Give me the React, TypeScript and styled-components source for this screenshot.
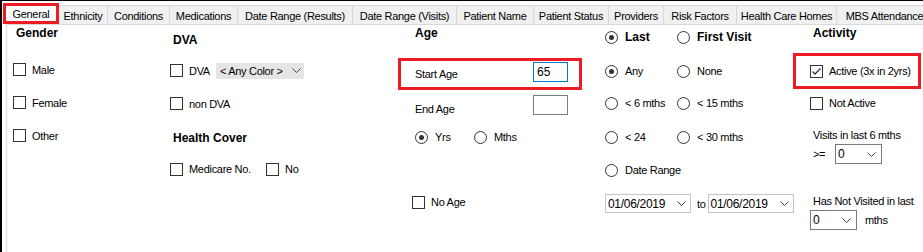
import React from "react";
import styled, { createGlobalStyle } from "styled-components";

const GlobalStyle = createGlobalStyle`
  html, body {
    margin: 0;
    padding: 0;
    background: #fff;
  }
  body {
    font-family: "Liberation Sans", Arial, sans-serif;
    font-size: 11px;
    color: #000;
  }
`;

const RED = "#ed1c24";

const Window = styled.div`
  width: 923px;
  height: 252px;
  box-sizing: border-box;
  border-top: 1px solid #000;
  border-left: 2px solid #000;
  background: #fff;
  overflow: hidden;
  display: flex;
  flex-direction: column;
`;

const TabStrip = styled.div`
  display: flex;
  align-items: flex-end;
  height: 23px;
  padding-left: 1px;
  flex-shrink: 0;
  white-space: nowrap;
`;

const Tab = styled.div<{ $w: number; $selected?: boolean }>`
  flex-shrink: 0;
  box-sizing: border-box;
  width: ${p => p.$w}px;
  height: ${p => (p.$selected ? 21 : 19)}px;
  display: flex;
  align-items: center;
  justify-content: center;
  letter-spacing: -0.3px;
  background: ${p => (p.$selected ? "#fff" : "#f0f0f0")};
  border: ${p => (p.$selected ? `3px solid ${RED}` : "1px solid #d9d9d9")};
  border-left: ${p => (p.$selected ? `3px solid ${RED}` : "none")};
  border-bottom: ${p => (p.$selected ? `3px solid ${RED}` : "none")};
  padding-top: ${p => (p.$selected ? 0 : 1)}px;
`;

const TabPage = styled.div`
  flex: 1;
  margin-left: 4px;
  border-left: 1px solid #d9d9d9;
  border-top: 1px solid #d9d9d9;
  padding-left: 6px;
  display: grid;
  grid-template-columns: 157px 228px 207px 188px 1fr;
  align-items: start;
`;

const Column = styled.div`
  display: flex;
  flex-direction: column;
  align-items: flex-start;
`;

const Heading = styled.div<{ $mt?: number; $indent?: number }>`
  font-weight: bold;
  font-size: 12px;
  line-height: 14px;
  height: 14px;
  margin-top: ${p => p.$mt ?? 0}px;
  padding-left: ${p => p.$indent ?? 0}px;
  white-space: nowrap;
`;

const Text = styled.div<{ $mt?: number; $indent?: number }>`
  line-height: 14px;
  height: 14px;
  letter-spacing: -0.3px;
  margin-top: ${p => p.$mt ?? 0}px;
  padding-left: ${p => p.$indent ?? 0}px;
  white-space: nowrap;
`;

const Line = styled.div<{ $mt?: number; $h?: number; $indent?: number }>`
  display: flex;
  align-items: center;
  height: ${p => p.$h ?? 20}px;
  margin-top: ${p => p.$mt ?? 0}px;
  padding-left: ${p => p.$indent ?? 0}px;
  white-space: nowrap;
`;

const Highlight = styled.div<{ $w: number; $h: number; $mt: number }>`
  box-sizing: border-box;
  width: ${p => p.$w}px;
  height: ${p => p.$h}px;
  margin-top: ${p => p.$mt}px;
  border: 3px solid ${RED};
  padding-left: 14px;
  display: flex;
  align-items: center;
  white-space: nowrap;
`;

const Label = styled.span<{ $bold?: boolean; $gap?: number }>`
  margin-left: ${p => p.$gap ?? 0}px;
  letter-spacing: ${p => (p.$bold ? "0" : "-0.3px")};
  font-weight: ${p => (p.$bold ? "bold" : "normal")};
  font-size: ${p => (p.$bold ? 12 : 11)}px;
`;

const FieldLabel = styled.span<{ $low?: boolean }>`
  display: inline-block;
  width: 118px;
  letter-spacing: -0.3px;
  align-self: ${p => (p.$low ? "flex-end" : "center")};
`;

const Box = styled.span`
  box-sizing: border-box;
  width: 13px;
  height: 13px;
  border: 1px solid #333;
  background: #fff;
  display: inline-flex;
  align-items: center;
  justify-content: center;
  flex-shrink: 0;
`;

const Circle = styled.span`
  box-sizing: border-box;
  width: 13px;
  height: 13px;
  border: 1px solid #333;
  border-radius: 50%;
  background: #fff;
  display: inline-flex;
  align-items: center;
  justify-content: center;
  flex-shrink: 0;
`;

const Dot = styled.span`
  width: 5px;
  height: 5px;
  border-radius: 50%;
  background: #333;
`;

const OptionSlot = styled.span<{ $w?: number }>`
  display: inline-flex;
  align-items: center;
  width: ${p => (p.$w ? `${p.$w}px` : "auto")};
`;

const TextInput = styled.div<{ $focused?: boolean }>`
  box-sizing: border-box;
  width: 35px;
  height: 20px;
  border: 1px solid ${p => (p.$focused ? "#0078d7" : "#7a7a7a")};
  padding-left: 3px;
  line-height: 18px;
  font-size: 12px;
  align-self: ${p => (p.$focused ? "flex-start" : "center")};
  margin-top: ${p => (p.$focused ? 1 : 0)}px;
`;

const Combo = styled.div<{ $w: number; $h: number; $flat?: boolean; $border?: string; $chevronGap: number; $ml?: number }>`
  box-sizing: border-box;
  width: ${p => p.$w}px;
  height: ${p => p.$h}px;
  margin-left: ${p => p.$ml ?? 0}px;
  display: flex;
  align-items: center;
  justify-content: space-between;
  padding-left: ${p => (p.$flat ? 4 : 2)}px;
  padding-right: ${p => p.$chevronGap}px;
  background: ${p => (p.$flat ? "#e5e5e5" : "#fff")};
  border: ${p => (p.$flat ? "none" : `1px solid ${p.$border}`)};
  letter-spacing: -0.3px;
  font-size: ${p => (p.$flat ? 11 : 12)}px;
`;

const Chevron = () => (
  <svg width="9" height="5" viewBox="0 0 9 5">
    <polyline points="0.5,0.5 4.5,4.5 8.5,0.5" fill="none" stroke="#444" strokeWidth="1" />
  </svg>
);

const Check = ({ label, checked, gap = 6 }: { label: string; checked?: boolean; gap?: number }) => (
  <>
    <Box>
      {checked && (
        <svg width="11" height="11" viewBox="0 0 11 11">
          <polyline points="1.5,5.5 4,8 9.5,2.5" fill="none" stroke="#333" strokeWidth="1.3" />
        </svg>
      )}
    </Box>
    <Label $gap={gap}>{label}</Label>
  </>
);

const Radio = ({ label, checked, bold, w }: { label: string; checked?: boolean; bold?: boolean; w?: number }) => (
  <OptionSlot $w={w}>
    <Circle>{checked && <Dot />}</Circle>
    <Label $gap={7} $bold={bold}>{label}</Label>
  </OptionSlot>
);

const tabs = [
  { label: "General", width: 56, selected: true },
  { label: "Ethnicity", width: 49 },
  { label: "Conditions", width: 62 },
  { label: "Medications", width: 68 },
  { label: "Date Range (Results)", width: 115 },
  { label: "Date Range (Visits)", width: 104 },
  { label: "Patient Name", width: 77 },
  { label: "Patient Status", width: 75 },
  { label: "Providers", width: 55 },
  { label: "Risk Factors", width: 73 },
  { label: "Health Care Homes", width: 100 },
  { label: "MBS Attendance", width: 96 },
];

const visitRows = [
  { left: "Any", right: "None", checked: true, mt: 14 },
  { left: "< 6 mths", right: "< 15 mths", mt: 12 },
  { left: "< 24", right: "< 30 mths", mt: 14 },
];

const ToWord = styled.span`
  margin: 0 2px 0 6px;
  letter-spacing: -0.3px;
`;

const Suffix = styled.span`
  margin-left: 8px;
  letter-spacing: -0.3px;
`;

const CompareLabel = styled.span`
  display: inline-block;
  width: 22px;
  letter-spacing: -0.3px;
`;

export default function App() {
  return (
    <>
      <GlobalStyle />
      <Window>
        <TabStrip>
          {tabs.map(t => (
            <Tab key={t.label} $w={t.width} $selected={t.selected}>
              {t.label}
            </Tab>
          ))}
        </TabStrip>
        <TabPage>
          <Column>
            <Heading $mt={1} $indent={3}>Gender</Heading>
            <Line $mt={13} $h={33}><Check label="Male" /></Line>
            <Line $h={33}><Check label="Female" /></Line>
            <Line $h={33}><Check label="Other" /></Line>
          </Column>

          <Column>
            <Heading $mt={8} $indent={3}>DVA</Heading>
            <Line $mt={7} $h={33}>
              <Check label="DVA" />
              <Combo $w={88} $h={16} $flat $chevronGap={3} $ml={6}>
                <span>&lt; Any Color &gt;</span>
                <Chevron />
              </Combo>
            </Line>
            <Line $h={33}><Check label="non DVA" /></Line>
            <Heading $mt={11} $indent={3}>Health Cover</Heading>
            <Line $mt={14}>
              <OptionSlot $w={96}><Check label="Medicare No." /></OptionSlot>
              <Check label="No" />
            </Line>
          </Column>

          <Column>
            <Heading $mt={1} $indent={17}>Age</Heading>
            <Highlight $w={184} $h={32} $mt={18}>
              <FieldLabel>Start Age</FieldLabel>
              <TextInput $focused>65</TextInput>
            </Highlight>
            <Line $mt={5} $indent={17}>
              <FieldLabel $low>End Age</FieldLabel>
              <TextInput />
            </Line>
            <Line $mt={12} $indent={17}>
              <Radio label="Yrs" checked w={59} />
              <Radio label="Mths" />
            </Line>
            <Line $mt={45} $indent={14}><Check label="No Age" /></Line>
          </Column>

          <Column>
            <Line $mt={2}>
              <Radio label="Last" checked bold w={72} />
              <Radio label="First Visit" bold />
            </Line>
            {visitRows.map(r => (
              <Line key={r.left} $mt={r.mt}>
                <Radio label={r.left} checked={r.checked} w={72} />
                <Radio label={r.right} />
              </Line>
            ))}
            <Line $mt={13}><Radio label="Date Range" /></Line>
            <Line $mt={14} $h={19}>
              <Combo $w={86} $h={19} $border="#c4c4c4" $chevronGap={4}>
                <span>01/06/2019</span>
                <Chevron />
              </Combo>
              <ToWord>to</ToWord>
              <Combo $w={86} $h={19} $border="#c4c4c4" $chevronGap={4}>
                <span>01/06/2019</span>
                <Chevron />
              </Combo>
            </Line>
          </Column>

          <Column>
            <Heading $mt={1} $indent={20}>Activity</Heading>
            <Highlight $w={128} $h={36} $mt={13}>
              <Check label="Active (3x in 2yrs)" checked />
            </Highlight>
            <Line $mt={4} $indent={17}><Check label="Not Active" /></Line>
            <Text $mt={15} $indent={20}>Visits in last 6 mths</Text>
            <Line $mt={2} $indent={20}>
              <CompareLabel>&gt;=</CompareLabel>
              <Combo $w={47} $h={20} $border="#7a7a7a" $chevronGap={5}>
                <span>0</span>
                <Chevron />
              </Combo>
            </Line>
            <Text $mt={30} $indent={20}>Has Not Visited in last</Text>
            <Line $mt={2} $indent={17}>
              <Combo $w={47} $h={20} $border="#7a7a7a" $chevronGap={5}>
                <span>0</span>
                <Chevron />
              </Combo>
              <Suffix>mths</Suffix>
            </Line>
          </Column>
        </TabPage>
      </Window>
    </>
  );
}
